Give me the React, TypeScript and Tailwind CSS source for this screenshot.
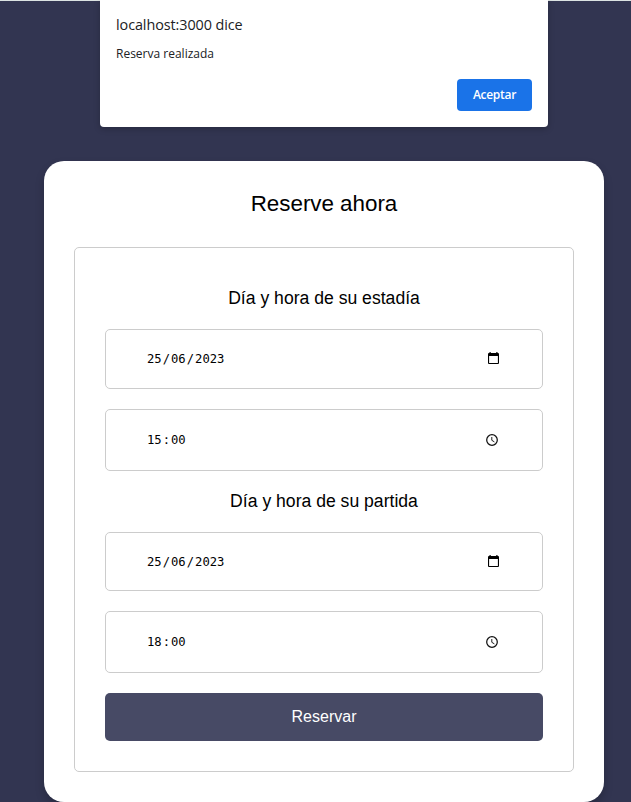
import React from "react";

function CalendarIcon() {
  return (
    <svg width="11" height="12" viewBox="0 0 11 12" className="mr-[1px] mb-[2px]" aria-hidden="true">
      <path
        fillRule="evenodd"
        fill="#000"
        d="M1.5 0H2.7v1h5.6V0h1.2v1H10a1 1 0 0 1 1 1v9a1 1 0 0 1-1 1H1a1 1 0 0 1-1-1V2a1 1 0 0 1 1-1h.5V0ZM1.1 4v6.9h8.8V4H1.1Z"
      />
    </svg>
  );
}

function ClockIcon() {
  return (
    <svg width="12" height="12" viewBox="0 0 12 12" fill="none" stroke="#111" className="mr-[2px]" aria-hidden="true">
      <circle cx="6" cy="6" r="5.3" strokeWidth="1.25" />
      <path d="M5.8 3v3.3l2.6 1.6" strokeWidth="0.95" />
    </svg>
  );
}

type FieldProps = {
  parts: string[];
  separator: string;
  icon: React.ReactNode;
  className: string;
};

function Field({ parts, separator, icon, className }: FieldProps) {
  return (
    <div
      className={`flex items-center justify-between rounded-[5px] border border-[#ccc] pr-[42px] pl-10 font-['DejaVu_Sans_Mono',monospace] text-[12.2px] leading-none text-black ${className}`}
    >
      <span className="flex">
        {parts.map((part, i) => (
          <React.Fragment key={i}>
            {i > 0 && <span>{separator}</span>}
            <span className="px-px">{part}</span>
          </React.Fragment>
        ))}
      </span>
      {icon}
    </div>
  );
}

export default function App() {
  return (
    <div className="relative flex h-[802px] w-[631px] flex-col overflow-hidden bg-[#323551] font-['Liberation_Sans',Arial,sans-serif] text-black">
      <div className="h-px shrink-0 bg-[#dce3e2]" />
      <main className="mt-[160px] ml-[44px] flex h-[641px] w-[560px] shrink-0 flex-col rounded-[20px] bg-white px-[30px] pt-[30px] shadow-[0_5px_10px_rgba(0,0,0,0.2)]">
        <h1 className="text-center text-[22.4px] leading-[26px] tracking-[-0.02px]">Reserve ahora</h1>
        <section className="mt-[30px] flex h-[525px] flex-col rounded-[5px] border border-[#ccc] px-[30px] pt-[40px]">
          <h2 className="text-center text-[17.6px] leading-5">Día y hora de su estadía</h2>
          <Field parts={["25", "06", "2023"]} separator="/" icon={<CalendarIcon />} className="mt-[21px] h-[60px]" />
          <Field parts={["15", "00"]} separator=":" icon={<ClockIcon />} className="mt-5 h-[62px]" />
          <h2 className="mt-5 text-center text-[17.6px] leading-5">Día y hora de su partida</h2>
          <Field parts={["25", "06", "2023"]} separator="/" icon={<CalendarIcon />} className="mt-[21px] h-[59px] pt-px" />
          <Field parts={["18", "00"]} separator=":" icon={<ClockIcon />} className="mt-5 h-[62px]" />
          <button className="mt-5 h-12 rounded-[5px] bg-[#474a65] text-[16px] leading-5 text-white">Reservar</button>
        </section>
      </main>

      <div
        role="dialog"
        className="absolute top-0 left-[100px] flex h-[127px] w-[448px] flex-col rounded-b-[4px] bg-white px-4 pt-[15px] font-['Open_Sans','Noto_Sans',sans-serif] text-[#202124] shadow-[0_2px_6px_rgba(0,0,0,0.22)]"
      >
        <p className="text-[14.4px] leading-5 tracking-[-0.08px]">localhost:3000 dice</p>
        <p className="mt-[9px] text-[12px] leading-5">Reserva realizada</p>
        <button className="mt-[15px] h-8 w-[75px] self-end rounded-[4px] bg-[#1a73e8] text-[12px] font-semibold tracking-[-0.3px] text-white">
          Aceptar
        </button>
      </div>
    </div>
  );
}
